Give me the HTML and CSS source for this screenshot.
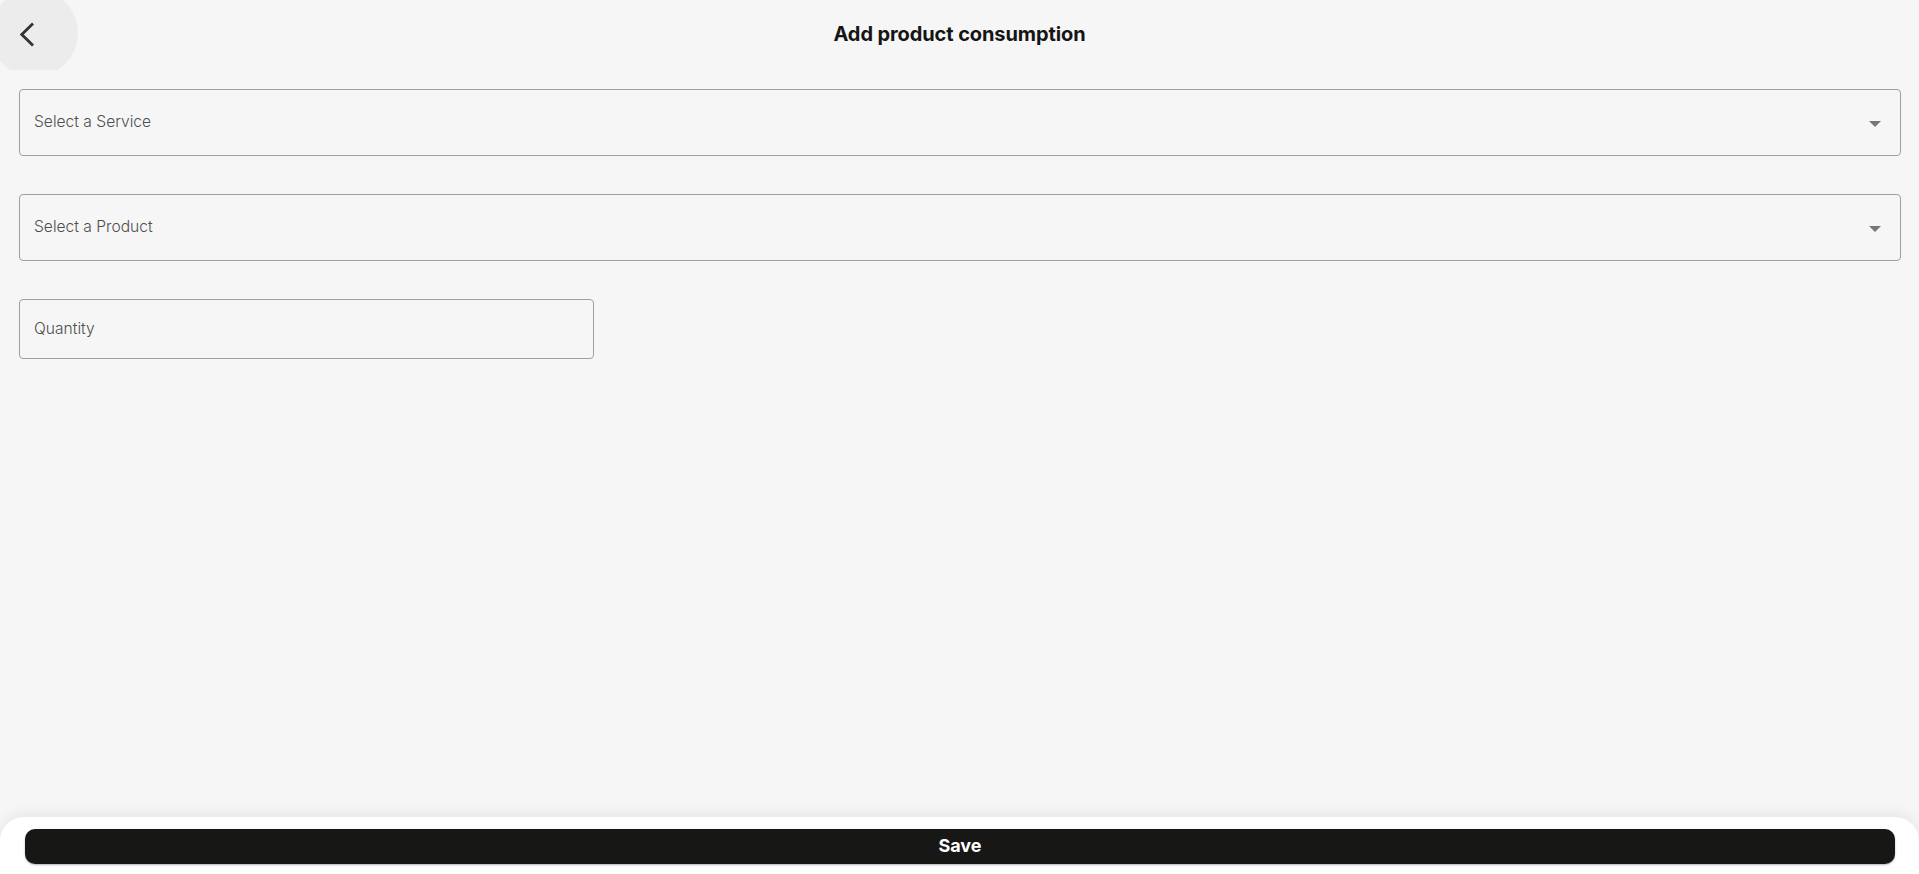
FILE: index.html
```html
<!DOCTYPE html>
<html>
<head>
    <title>Add product consumption</title>
    <link rel="stylesheet" href="styles.css">
</head>
<body>
    <div class="page">
        <header class="toolbar">
            <button class="back-btn" aria-label="Back">
                <svg width="16" height="26" viewBox="0 0 16 26">
                    <polyline points="13,1.5 1.8,12.5 13,23.5" fill="none" stroke="#333" stroke-width="2.8" stroke-linejoin="miter"/>
                </svg>
            </button>
            <h1 class="title">Add product consumption</h1>
        </header>

        <main class="form">
            <div class="field select">
                <span class="placeholder">Select a Service</span>
                <span class="caret"></span>
            </div>
            <div class="field select">
                <span class="placeholder">Select a Product</span>
                <span class="caret"></span>
            </div>
            <div class="field quantity">
                <span class="placeholder">Quantity</span>
            </div>
        </main>

        <footer class="footer">
            <button class="save-btn">Save</button>
        </footer>
    </div>
</body>
</html>
```

FILE: styles.css
```css
* {
    box-sizing: border-box;
}
html, body {
    margin: 0;
    height: 100%;
}
body {
    font-family: Inter, "Noto Sans", sans-serif;
    background: #f6f6f6;
    color: #111;
}
.page {
    display: flex;
    flex-direction: column;
    min-height: 100vh;
}
.toolbar {
    position: relative;
    height: 70px;
    display: flex;
    align-items: center;
    justify-content: center;
    overflow: hidden;
    padding-bottom: 3px;
}
.back-btn {
    position: absolute;
    left: -10px;
    top: -11px;
    width: 88px;
    height: 88px;
    border: none;
    border-radius: 50%;
    background: #ececec;
    display: flex;
    align-items: center;
    justify-content: center;
    padding: 0;
    cursor: pointer;
}
.back-btn svg {
    transform: translate(-6px, 2px);
}
.title {
    margin: 0;
    font-size: 20px;
    font-weight: 700;
    color: #151515;
    letter-spacing: -0.1px;
}
.form {
    flex: 1;
    display: flex;
    flex-direction: column;
    gap: 38px;
    padding: 19px 18px 0 19px;
}
.field {
    display: flex;
    align-items: center;
    justify-content: space-between;
    border: 1.5px solid #a0a0a0;
    border-radius: 4px;
    padding: 0 19px 3px 14px;
    background: #f6f6f6;
}
.select {
    height: 67px;
}
.quantity {
    width: 575px;
    height: 60px;
    padding-bottom: 1px;
}
.placeholder {
    font-size: 15.6px;
    font-weight: 300;
    color: #4e4e4e;
}
.caret {
    width: 0;
    height: 0;
    border-left: 6px solid transparent;
    border-right: 6px solid transparent;
    border-top: 6px solid #777;
    margin-top: 6px;
}
.footer {
    background: #fff;
    border-radius: 24px 24px 0 0;
    box-shadow: 0 -3px 14px rgba(0, 0, 0, 0.07);
    padding: 12px 24px 10px 25px;
}
.save-btn {
    display: block;
    width: 100%;
    height: 35px;
    border: none;
    border-radius: 10px;
    background: #171816;
    color: #fff;
    font-family: inherit;
    font-size: 18px;
    font-weight: 700;
    padding: 0 0 2px;
    cursor: pointer;
    box-shadow: 0 1px 2px rgba(0, 0, 0, 0.3);
}
```
